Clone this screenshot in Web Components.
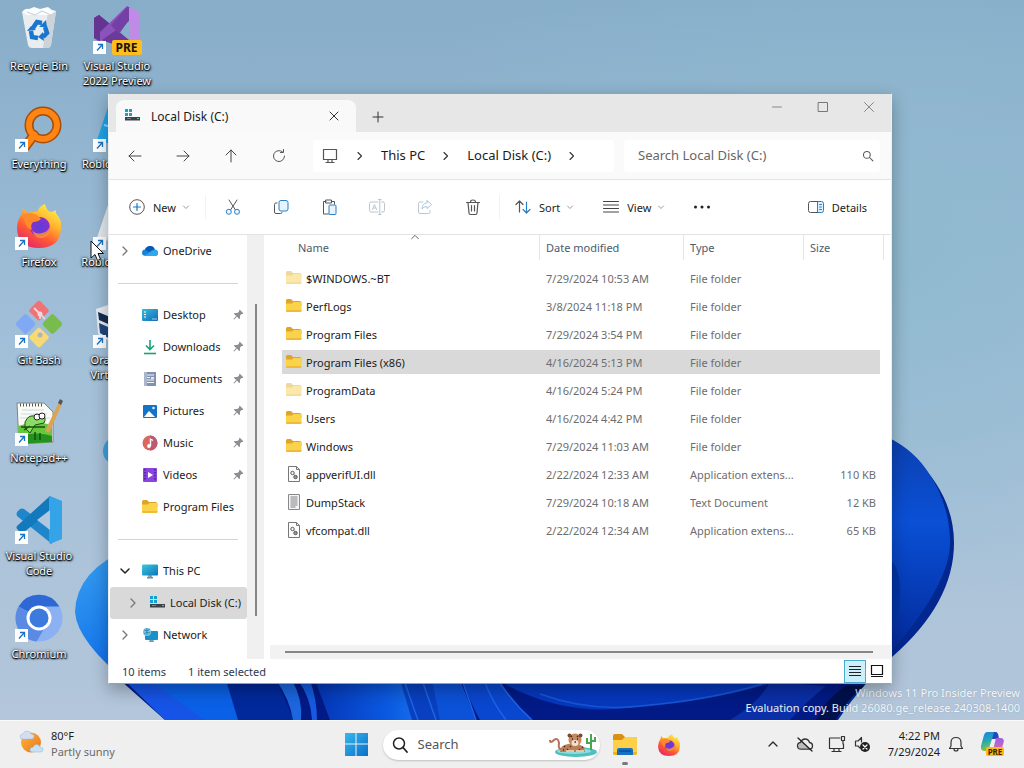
<!DOCTYPE html>
<html lang="en">
<head>
<meta charset="utf-8">
<title>Desktop</title>
<style>
html,body{height:100%;margin:0}
body{font:11px/15px "Noto Sans","Open Sans",sans-serif;color:#1b1b1b;overflow:hidden}
</style>
</head>
<body>
<desk-top></desk-top>
<script>
const folder = (a, b, c) => `<path d="M0 2.500Q0 1 1.500 1H5l2 2h6.500Q15.500 3 15.500 5V8H0z" fill="${c}"/><path d="M0 5.500h6l1.500-1.500H15.500v8.500Q15.500 14 14 14H1.500Q0 14 0 12.500z" fill="${a}"/><path d="M0 12h15.500v.5q0 1.500-1.500 1.500H1.500Q0 14 0 12.500z" fill="${b}"/>`;
const line = (d, c = '#444', w = 1) => `<path d="${d}" fill="none" stroke="${c}" stroke-width="${w}" stroke-linecap="round" stroke-linejoin="round"/>`;
const fox = `<defs><linearGradient id="a" x1=".8" y1="0" x2=".2" y2="1"><stop offset="0" stop-color="#fff44f"/><stop offset=".35" stop-color="#ffb52e"/><stop offset=".65" stop-color="#ff5a36"/><stop offset="1" stop-color="#e3206f"/></linearGradient><radialGradient id="b"><stop offset="0" stop-color="#5b3fd6"/><stop offset="1" stop-color="#8a2fd0"/></radialGradient></defs><path d="M30 2q1 5 5 8 3 0 6-2-1 3 2 6 4 5 3 13-1 19-22 19Q3 46 2 27q0-9 5-15l1-6 5 5q5-2 9-1 2-6 8-8z" fill="url(#a)"/><circle cx="25" cy="25" r="10" fill="url(#b)"/><path d="M7 13l6-2q8-1 13 6-3 3-8 3-3 3-1 8-6-2-7-8z" fill="#ff8a2a"/><path d="M17 28q4 5 10 3 6-1 8-7 1 10-8 12-7 1-10-8z" fill="#ff9b28" opacity=".8"/>`;
const disk = `<g fill="#17a0cf"><path d="M1 1h3v3H1zM5 1h3v3H5zM1 5h3v3H1zM5 5h3v3H5z"/></g><path d="M1 9h15v3.500H1z" fill="#3d4148"/><path d="M3 10h4v1H3z" fill="#7b8088"/><path d="M13 10h2v1h-2z" fill="#4fd0a0"/>`;
const monitor = `<defs><linearGradient id="m" x2="1" y2="1"><stop offset="0" stop-color="#3ec7d8"/><stop offset="1" stop-color="#0a75bd"/></linearGradient></defs><path d="M6.500 12h3l1 3h-5z" fill="#8ca3b3"/><path d="M5 14h6v1.500H5z" fill="#5b93ad"/><rect x="0" y="1.500" width="16" height="11" rx="1" fill="url(#m)"/>`;
const dll = `<path d="M2.500.5h8l3 3v12h-11z" fill="#fdfdfd" stroke="#777"/><path d="M10.500.5v3h3" fill="none" stroke="#777"/><circle cx="6.500" cy="7" r="1.700" fill="none" stroke="#555"/><circle cx="9.500" cy="11" r="1.700" fill="#99a" stroke="#555"/><path d="M7.500 8l1.500 2" stroke="#777"/>`;
const ICONS = {
  folder: [16, folder('#fbd34b', '#eebb36', '#dea52a')],
  folderDim: [16, folder('#fae9a9', '#f5dda0', '#eed7a0')],
  dll: [16, dll], disk: [16, disk], monitor: [16, monitor],
  text: [16, `<path d="M2.500.5h11v15h-11z" fill="#f4f4f4" stroke="#888"/><path d="M4.500 3h7M4.500 5h7M4.500 7h7M4.500 9h7M4.500 11h7M4.500 13h5" stroke="#7d8187"/>`],
  onedrive: [16, `<path d="M4 13Q0 13 0 9.700 0 6.800 3 6.500 4.500 3 8.200 3q3.600 0 4.500 3.500Q16 6.800 16 9.900 16 13 13 13z" fill="#1583dc"/><path d="M3 6.500Q4.500 3 8.200 3q3.600 0 4.500 3.500Q10 6 7 9z" fill="#0a57b5"/><path d="M2.500 12.700L10 8q4-2 5.700.5.300.6.300 1.500Q16 13 13 13H4z" fill="#31a8ee"/>`],
  desktop: [16, `<defs><linearGradient id="m" x2="1" y2="1"><stop offset="0" stop-color="#35bcd8"/><stop offset="1" stop-color="#1668bb"/></linearGradient></defs><rect y="2" width="16" height="12" rx="1" fill="url(#m)"/><path d="M2 5h2M2 7.500h2M2 10h2" stroke="#fff"/><path d="M10 12h5" stroke="#8fd5ee"/>`],
  download: [16, `<path d="M8 1v9M4 6.500L8 10.500l4-4" fill="none" stroke="#18a27c" stroke-width="1.600"/><path d="M2 14.500h12" stroke="#18a27c" stroke-width="1.600"/>`],
  document: [16, `<path d="M2 1h12v14H2z" fill="#8192b1"/><path d="M2 1h3v14H2z" fill="#a9b6cc"/><path d="M5 4h7M5 6.500h3M5 9h7M5 11.500h7" stroke="#f4f7fb" stroke-width="1.200"/><path d="M9 6h3v2H9z" fill="#dfe8f5"/>`],
  picture: [16, `<rect x="1" y="2" width="14" height="13" rx="1" fill="#1373c6"/><path d="M2 14l5-6 6 6z" fill="#fff"/><circle cx="11.500" cy="5" r="1.300" fill="#d5efff"/>`],
  music: [16, `<circle cx="8" cy="8" r="7.500" fill="#d9685f"/><path d="M8 .5a7.500 7.500 0 0 1 0 15z" fill="#bd5a70"/><path d="M8.500 3.500v7.500M8.500 4l2.500 1.500" stroke="#fff" stroke-width="1.400"/><circle cx="7" cy="11" r="1.900" fill="#fff"/>`],
  video: [16, `<rect x="1" y="1" width="14" height="14" rx="1" fill="#8a45e0"/><path d="M3 2v12M13 2v12" stroke="#4b218f" stroke-width="1.500" stroke-dasharray="1.500 1.500"/><path d="M6 5l5 3-5 3z" fill="#fff"/>`],
  network: [16, `<path d="M8 12h3l1 3H7z" fill="#6aa0b8"/><rect x="3" y="4" width="13" height="9" rx="1" fill="#1b8fc9"/><circle cx="5" cy="5" r="4" fill="#7cc4e4"/><path d="M2 3q3 2 6-1M2 7q2-3 6-1M5 1v7" fill="none" stroke="#2a7ea6" stroke-width=".8"/>`],
  pin: [12, `<g transform="rotate(45 6 6)"><path d="M3.500 1h5v1l-.7.7v2.300l2 2v1H2.200V7l2-2V2.700l-.7-.7z" fill="#8a8f94"/><path d="M6 8v4" stroke="#8a8f94"/></g>`],
  right: [12, line('M4 2l4 4-4 4', '#777', 1.3)],
  rightBold: [12, line('M4 2.500L7.500 6 4 9.500', '#333', 1.1)],
  down: [12, line('M2 4l4 4 4-4', '#222', 1.5)],
  downSmall: [8, line('M1.500 3L4 5.500 6.500 3', '#999')],
  up: [12, line('M2 8l4-4 4 4', '#222', 1.2)],
  asc: [12, line('M2 8l4-4 4 4', '#666', 1.2)],
  back: [16, line('M14 8H2M7 3L2 8l5 5')], forward: [16, line('M2 8h12M9 3l5 5-5 5')],
  upArrow: [16, line('M8 14V2M3 7l5-5 5 5')],
  refresh: [16, line('M13.500 8a5.500 5.500 0 1 1-2-4.200M12.500 1.500V4.500H9.500', '#555')],
  pc: [16, line('M1.500 1.500h13v10h-13zM6 11.500v3M10 11.500v3M4 14.500h8', '#555', 1.2)],
  search: [16, `<circle cx="6.500" cy="6.500" r="4.500" fill="none" stroke="#555" stroke-width="1.400"/>` + line('M10 10l4.500 4.500', '#555', 1.4)],
  searchBold: [16, `<circle cx="7" cy="6.500" r="5.500" fill="none" stroke="#222" stroke-width="1.500"/>` + line('M11 10.500l4 4.500', '#222', 1.8)],
  plus: [12, line('M6 1v10M1 6h10', '#333')], close: [12, line('M2 2l8 8M10 2l-8 8', '#333')],
  min: [12, line('M1.500 6h9', '#888')], max: [12, line('M1.500 1.500h9v9h-9z', '#777')], closeDim: [12, line('M1.500 1.500l9 9M10.500 1.500l-9 9', '#888')],
  new: [16, `<circle cx="8" cy="8" r="7.300" fill="none" stroke="#555"/>` + line('M8 4.500v7M4.500 8h7', '#1679c6', 1.2)],
  cut: [16, line('M4 1l6.500 10M12 1L5.500 11', '#555') + `<g fill="#eaf5ff" stroke="#2b7fc4"><circle cx="3.800" cy="12.800" r="2.500"/><circle cx="12" cy="12.800" r="2.500"/></g>`],
  copy: [16, line('M4 4H3Q1.500 4 1.500 5.500V13q0 1.500 1.500 1.500h4.500q1.500 0 1.500-1', '#555') + `<rect x="6" y="1.500" width="9" height="10.500" rx="2" fill="#e6f4ff" stroke="#2b7fc4"/>`],
  paste: [16, line('M5 2.500H2.500v12.500h5M10.500 2.500H13.500V5M5 1h5.500v3H5z', '#555') + `<rect x="8" y="6" width="7" height="9.500" rx="1" fill="#e6f4ff" stroke="#2b7fc4"/>`],
  rename: [16, `<g opacity=".55">` + line('M9 3H2Q.5 3 .5 4.500v7Q.5 13 2 13h7M12.500 3h1.500q1.500 0 1.500 1.500v7q0 1.500-1.500 1.500h-1.500M3.500 10.500l2-5 2 5M4.200 9h2.600', '#8a97a5') + line('M10.800 1v14M9.500.5h2.600M9.500 15.500h2.600', '#6b9cc4') + '</g>'],
  share: [16, `<g opacity=".55">` + line('M6 3H3Q1.500 3 1.500 4.500V13q0 1.500 1.500 1.500h8.500q1.500 0 1.500-1.500v-1.500', '#8a97a5') + line('M10 1.500l4.500 4-4.500 4V7.500Q6.500 7.500 5 10 5 4.500 10 3.700z', '#6b9cc4') + '</g>'],
  trash: [16, line('M1.500 3.500h13M5.500 3Q5.500 1 8 1t2.500 2M3 3.500l1 10.500q0 1.500 1.500 1.500h5q1.500 0 1.500-1.500l1-10.500M6.500 6.500v5.500M9.500 6.500v5.500', '#555', 1.2)],
  sort: [16, line('M4.500 13V2M1 5.500L4.500 2 8 5.500', '#555', 1.2) + line('M11.500 3v11M8 10.500l3.500 3.500 3.500-3.500', '#2b7fc4', 1.2)],
  view: [16, line('M.5 2.500h15M.5 6h15M.5 9.500h15M.5 13h15')],
  more: [18, `<g fill="#222"><circle cx="2.500" cy="9" r="1.500"/><circle cx="9" cy="9" r="1.500"/><circle cx="15.500" cy="9" r="1.500"/></g>`],
  details: [16, `<path d="M9.500 2.500H13.500q2 0 2 2v7q0 2-2 2h-4z" fill="#e0f2ff" stroke="#2b7fc4"/>` + line('M9.500 2.500H2.500q-2 0-2 2v7q0 2 2 2h7', '#555') + line('M11.500 5.500h2M11.500 8h2M11.500 10.500h2', '#2b7fc4')],
  list: [14, `<path d="M1 2.500h12M1 5.500h12M1 8.500h12M1 11.500h12" stroke="#222"/>`],
  tiles: [14, `<path d="M1.500 1.500h11v9h-11z" fill="#fff" stroke="#111" stroke-width="1.200"/><path d="M1 12.500h12" stroke="#111"/>`],
  start: [24, `<defs><linearGradient id="s" x2="1" y2="1"><stop offset="0" stop-color="#35b8ee"/><stop offset="1" stop-color="#0a6fca"/></linearGradient></defs><path d="M1 0h10.500v10.500H1zM12.500 0H24v10.500H12.500zM1 11.500h10.500V23H1zM12.500 11.500H24V23H12.500z" fill="url(#s)"/>`],
  explorer: [24, `<path d="M0 3q0-2 2-2h7l3 3h10q2 0 2 2v6H0z" fill="#d99016"/><path d="M0 7h9l3-3h10q2 0 2 2v14q0 2-2 2H0z" fill="#fdd047"/><path d="M0 19h24v1q0 2-2 2H2q-2 0-2-2z" fill="#efb424"/><path d="M4 22v-5q0-2 2-2h12q2 0 2 2v5z" fill="#1671c4"/><path d="M6 18h12" stroke="#0a4f99" stroke-width="1.500"/>`],
  firefox: [48, fox],
  weather: [26, `<defs><linearGradient id="w" x2="1" y2="1"><stop offset="0" stop-color="#ffb73a"/><stop offset="1" stop-color="#e8731c"/></linearGradient></defs><circle cx="13" cy="11.500" r="10" fill="url(#w)"/><path d="M5 8q-3 0-3-2.500T5 3q1-3 4-3t4 3q3 0 3 2.500T13 8z" fill="#d3def2" stroke="#a9b9dc" stroke-width=".6"/><path d="M15 21q-3 0-3-2.300t3-2.400q1-2.800 3.700-2.800t3.300 2.800q3 0 3 2.400T22 21z" fill="#c7e2f6" stroke="#93bddd" stroke-width=".6"/>`],
  leopard: [48, `<ellipse cx="27" cy="20" rx="21" ry="5" fill="#4fbfc2"/><ellipse cx="25" cy="19" rx="17" ry="3" fill="#8edcda"/><path d="M12 17Q9 17 10 11 9 5 5 8q-4 4-4 0" fill="none" stroke="#b86f5e" stroke-width="2"/><path d="M11 20q0-7 8-8 9-2 16 3l1 5z" fill="#b98058"/><circle cx="26" cy="8" r="6.500" fill="#c48a60"/><circle cx="20.500" cy="3.500" r="2" fill="#7a4b34"/><circle cx="31.500" cy="3.500" r="2" fill="#7a4b34"/><ellipse cx="26" cy="11" rx="3.500" ry="3" fill="#f3dfcf"/><path d="M23 7h1M28 7h1M25.500 10h1.500M22 4l1 1M28 4l1 1M15 14l1 1M18 17l1 1M21 14l1 1M33 15l1 1M30 17l1 1M14 18h1" stroke="#4a2c22" stroke-width="1.400"/><path d="M17 19h8M27 19h8" stroke="#e7c7a8" stroke-width="2"/><path d="M42 18V2M42 11h-4V6M42 9h4V5" fill="none" stroke="#4ba653" stroke-width="2"/>`, 26],
  cloudOff: [18, line('M5 14Q1.500 14 1.500 10.800 1.500 8 4.500 7.500 6 4 9 4q3.500 0 4.500 3.500 3 .3 3 3.200Q16.500 14 13.500 14z', '#333', 1.3) + `<path d="M5 14q-3 0-3-3t3-3l1-2 8 8z" fill="#999" opacity=".6"/>` + line('M2 3l14 13', '#222', 1.3)],
  netPc: [18, line('M12 3H1.500v10.500h14V9M6 13.500V16M11 13.500V16M4 16.500h9M13.500 1.500h3v4h-3zM15 5.500V9', '#333', 1.2)],
  mute: [18, line('M8.500 2.500L5 6H2.500v5H5l2 2M8.500 2.500V7', '#333', 1.2) + `<circle cx="12" cy="12" r="5" fill="#222"/>` + line('M10 10l4 4M14 10l-4 4', '#fff', 1.2)],
  bell: [16, line('M1.500 12.500L3 10V6.500Q3 1.500 8 1.500t5 5V10l1.500 2.500zM6 13q0 2 2 2t2-2', '#333', 1.2)],
  copilot: [24, `<defs><linearGradient id="c" x2=".3" y2="1"><stop offset="0" stop-color="#1e7fe0"/><stop offset=".5" stop-color="#22a7b8"/><stop offset="1" stop-color="#8cc63f"/></linearGradient><linearGradient id="d" x2="0" y2="1"><stop offset="0" stop-color="#9a5fe6"/><stop offset="1" stop-color="#f0709a"/></linearGradient></defs><path d="M7 0h8q3 0 3 4l-2 3h-4L8 19H5Q0 19 1 14L4 3Q5 0 7 0z" fill="url(#c)"/><path d="M14 0h1q3 0 3.500 4L19 7h-7z" fill="#2747c0"/><path d="M16 6h4q5 0 3.500 5L21 19q-1 3-4 3H9q3 0 4-4z" fill="url(#d)"/><rect x="6" y="15" width="18" height="9" rx="2" fill="#fbbb16"/><text x="15" y="22.500" text-anchor="middle" font-family="Noto Sans" font-weight="700" font-size="8" fill="#3a2100">PRE</text>`],
  recycle: [48, `<path d="M7 6l34-1-5 34q-1 3-4 3H17q-3 0-4-3z" fill="#e9edf0"/><path d="M33 5h8l-5 34q-1 3-4 3h-4z" fill="#ccd3d9"/><path d="M7 6q3-4 7-3l5-2 6 2 8-2 4 3 4 1-6 4H12z" fill="#fafcfd"/><path d="M12 6l8 3 7-4 9 4" fill="none" stroke="#c5ced6"/><g fill="none" stroke="#1976cf" stroke-width="4.500"><path d="M18 22l4-6 5 1"/><path d="M30 21l2 6-4 4"/><path d="M23 32l-6-1-1-6"/></g><path d="M24 21h8l-1-7zM28 26l-5 5 6 4zM12 25l4-5 5 4z" fill="#1976cf"/>`],
  vs: [48, `<path d="M1 12l5-3 30 25-6 7L1 32z" fill="#6b3a9c"/><path d="M1 32L34 0l4 2v12L6 36z" fill="#8c52bb"/><path d="M1 12l5-3 10 8-9 8v10l-6-3z" fill="#653493"/><path d="M36 1l11 5v33l-11 5z" fill="#c08be6"/><path d="M36 1l-2 0-16 18 8 9L36 14z" fill="#7440a5"/><rect x="19" y="34" width="30" height="15" rx="2" fill="#ffbd1e"/><text x="33.500" y="46" text-anchor="middle" font-family="Noto Sans" font-weight="700" font-size="12" fill="#1b1200">PRE</text>`],
  everything: [48, `<g fill="none" stroke-linecap="round"><path d="M19 31L10 43" stroke="#a64d0c" stroke-width="10"/><circle cx="28" cy="21" r="14" stroke="#a64d0c" stroke-width="9"/><path d="M19 31L10 43" stroke="#ff8411" stroke-width="7"/><circle cx="28" cy="21" r="14" stroke="#ff8411" stroke-width="6"/></g>`],
  git: [48, `<g transform="rotate(45 24 24)"><rect x="7" y="7" width="15" height="15" rx="2" fill="#ee7377"/><rect x="26" y="7" width="15" height="15" rx="2" fill="#78bd4c"/><rect x="7" y="26" width="15" height="15" rx="2" fill="#80a9f5"/><rect x="26" y="26" width="15" height="15" rx="2" fill="#f7da71"/></g><path d="M19 8l6 6v5M25 14l5 5M25 29v7" fill="none" stroke="#e9d0d4" stroke-width="2"/><circle cx="25" cy="14" r="2.500" fill="#f0d7da"/><circle cx="25" cy="35" r="2.500" fill="#aeb4ba"/>`],
  npp: [48, `<path d="M2 5h27l9 9v30l-34 2z" fill="#fbfbf6" stroke="#7f8480"/><path d="M3 28q16-6 34-1v17l-33 2z" fill="#64c83a"/><path d="M3 38q20-5 34 0v6l-33 2z" fill="#23921f"/><path d="M5 7h24" stroke="#555" stroke-width="3" stroke-dasharray="1 2"/><path d="M7 12h22M6 16h26M5 20h30" stroke="#ccd6dd"/><path d="M10 24q4-9 12-5l5-3q5 4 2 9l-9 2-5 8-5-5z" fill="#8add63" stroke="#2b4b20"/><circle cx="22" cy="19" r="3" fill="#fff" stroke="#222"/><circle cx="27" cy="18" r="3" fill="#fff" stroke="#222"/><path d="M6 29h24M9 32l6-4M20 42v-8M25 42v-7" stroke="#174f14" stroke-width="1.500"/><path d="M30 33l14-29 3 2-13 29z" fill="#dca354"/><path d="M43 5l2-4 3 2-2 4z" fill="#4d5560"/>`],
  vscode: [48, `<path d="M2 16l3-3q2-1 4 0l28 21v14L2 20q-1-2 0-4z" fill="#1f86cc"/><path d="M35 0l2 14L9 36q-2 1-4 0l-3-3q-1-2 0-3z" fill="#1279bd"/><path d="M35 0l12 5v38l-12 5-1-2V2z" fill="#35a3e8"/><path d="M35 14v20L22 24z" fill="#b0c7de"/>`],
  chromium: [48, `<circle cx="24" cy="24" r="23.500" fill="#8bb1f3"/><path d="M24 24L3.600 12.500a23.500 23.500 0 0 1 40.800 0H24z" fill="#2d68d4"/><path d="M3.600 12.500a23.500 23.500 0 0 0 18 35L32 30z" fill="#5a8ae2"/><circle cx="24" cy="24" r="12.500" fill="#fff"/><circle cx="24" cy="24" r="9.500" fill="#3c7ade"/>`],
  player: [48, `<path d="M16 0L46 8 38 46 4 36z" fill="#1fa4ea"/><path d="M11 21l32 8" stroke="#8fd3f5" stroke-width="2"/>`],
  studio: [48, `<path d="M16 0L46 8 38 46 4 36z" fill="#c3cad0"/><path d="M16 0l8 2-10 36-10-2z" fill="#e6eaed"/>`],
  vbox: [48, `<path d="M3 9L24 2l22 8-2 26-20 10L5 34z" fill="#e6ebf2"/><path d="M5 12l17 7v8L6 20z" fill="#172c50"/><path d="M6 23l16 7v12L7 33z" fill="#20457d"/><path d="M26 20l18-8-2 23-16 8z" fill="#20457d"/>`],
  cursor: [24, `<path d="M3 1v17l4-3.500 2.500 6 3-1.300L10 13.500h5.500z" fill="#fff" stroke="#111"/>`],
  shortcut: [13, `<path d="M0 0h13v13H0z" fill="#fff"/><path d="M4 9.500l5-5.500M5 3.500h4.500V8" fill="none" stroke="#1a72c4" stroke-width="1.300"/>`]
};
function define(tag, css, html, setup) {
  const t = document.createElement('template');
  t.innerHTML = `<style>*{box-sizing:border-box}button{font:inherit;color:inherit;background:none;border:0;padding:0;margin:0}input{font:inherit;border:0;background:none;outline:0;padding:0;min-width:0}${css}</style>${html}`;
  customElements.define(tag, class extends HTMLElement {
    constructor() {
      super();
      this.attachShadow({ mode: 'open' }).append(t.content.cloneNode(true));
    }
    connectedCallback() { if (setup) setup(this, this.shadowRoot); }
  });
}
define('ui-icon', ':host{display:inline-flex;flex:none;width:var(--w,16px);height:var(--h,16px)}svg{display:block;width:100%;height:100%;overflow:visible}', '<svg aria-hidden="true"></svg>', (h, r) => {
  const [w, body, tall = w] = ICONS[h.getAttribute('name')];
  const s = r.querySelector('svg');
  s.setAttribute('viewBox', `0 0 ${w} ${tall}`);
  s.innerHTML = body;
  h.style.setProperty('--w', (h.getAttribute('size') || w) + 'px');
  h.style.setProperty('--h', (h.getAttribute('size') || tall) + 'px');
});
define('desk-icon', `:host{display:block;width:78px;height:98px}
button{display:flex;flex-direction:column;align-items:center;width:100%;padding-top:6px;gap:4px}
.pic{position:relative;display:flex}.arrow{position:absolute;left:0;bottom:0}
span.t{color:#fff;line-height:15px;white-space:pre-line;text-shadow:1px 1px 2px #000,0 1px 1px #000,0 0 3px #000}`,
`<button><span class="pic"></span><span class="t"><slot></slot></span></button>`, (h, r) => {
  r.querySelector('.pic').innerHTML = `<ui-icon name="${h.getAttribute('icon')}" size="48"></ui-icon>` + (h.hasAttribute('link') ? '<ui-icon class="arrow" name="shortcut"></ui-icon>' : '');
});
define('wall-paper', ':host{display:block}svg{display:block;width:100%;height:100%}', `<svg viewBox="0 0 1024 720" preserveAspectRatio="xMidYMax slice" aria-hidden="true">
<defs><linearGradient id="bg" x2="0" y2="1"><stop offset="0" stop-color="#87adc9"/><stop offset=".5" stop-color="#a3c0d9"/><stop offset="1" stop-color="#b3c6da"/></linearGradient>
<radialGradient id="gl" cx=".85" cy=".35" r=".5"><stop offset="0" stop-color="#8fb9cf"/><stop offset="1" stop-color="#8fb9cf" stop-opacity="0"/></radialGradient>
<linearGradient id="l" x1="0" y1="0" x2=".6" y2="1"><stop offset="0" stop-color="#3aa2ee"/><stop offset=".5" stop-color="#1779ec"/><stop offset="1" stop-color="#0b4fd8"/></linearGradient>
<linearGradient id="r" y2="1" x2="0"><stop offset="0" stop-color="#0c3fae"/><stop offset=".4" stop-color="#0a50d6"/><stop offset="1" stop-color="#032a9a"/></linearGradient>
<linearGradient id="f" x2="1"><stop offset="0" stop-color="#0535b4"/><stop offset=".6" stop-color="#0a58e0"/><stop offset="1" stop-color="#1b78f0"/></linearGradient></defs>
<rect width="1024" height="720" fill="url(#bg)"/><rect width="1024" height="720" fill="url(#gl)"/>
<path d="M120 434q-17 5-17 17t17 16z" fill="#3f9fdc"/>
<path d="M130 548Q76 570 75 612q2 30 56 73l38 35h60V560z" fill="url(#l)"/>
<path d="M110 600q-6 24 4 60l26 30h80V590z" fill="#0f5be2"/>
<path d="M860 427q34 8 56 32 38 38 38 84 0 60-62 114-34 32-54 63H790V440z" fill="#02288f"/>
<path d="M880 434q30 12 46 35 24 34 24 74 0 40-58 108z" fill="url(#r)"/>
<path d="M892 562q8 8 8 30t-8 40z" fill="#0334a4"/>
<path d="M120 680h750q-26 18-40 40H165z" fill="#021a86"/>
<path d="M124 680l41 40h45l-54-40z" fill="#1554e6"/><path d="M150 680l54 40h36l-14-40z" fill="#0a60e6"/>
<path d="M226 680l12 40h56l-18-40z" fill="#02299c"/>
<path d="M276 680q14 20 17 40h8q2-20-9-40z" fill="#1c66df"/><path d="M298 680q13 18 14 40h5q0-20-7-40z" fill="#155ae0"/>
<path d="M315 680h95l22 40H330z" fill="url(#f)"/>
<path d="M400 680l12 40h32l-12-40z" fill="#0840c0"/><path d="M432 680l8 40h36l-16-40z" fill="#0c52d8"/><path d="M462 680q8 22 18 40h52q-22-20-34-40z" fill="#0a47d0"/>
<path d="M404 680q6 18 14 40M422 680l14 40M462 680l14 40M484 680q8 22 22 40M498 680q14 22 34 40" fill="none" stroke="#1d64e4" stroke-width="1.500"/>
<path d="M498 680q60 36 130 28 80-6 140-24l-2-4z" fill="#0638bd"/>
<path d="M540 694q50 18 100 12 70-6 122-22" fill="none" stroke="#1656d4" stroke-width="1.500"/>
<path d="M770 682q-10 20-40 38h60q16-18 36-34z" fill="#0a2fa8"/><path d="M846 686q-20 12-30 34h20q10-20 28-34z" fill="#01104e"/>
</svg>`);
define('nav-item', `:host{display:block}button{display:flex;align-items:center;width:100%;height:32px;padding:0 3px 0 9px;text-align:left;white-space:nowrap;line-height:16px}
:host([deep]) button{padding-left:17px}:host([on]) button{background:#d9d9d9;border-radius:3px}.c{width:12px;margin-right:11px;display:flex;flex:none}.i{display:flex;margin-right:5px}.p{margin-left:auto;display:flex}:host([deep]) button{padding-right:0}:host([deep]) .c{margin-right:10px}`,
`<button><span class="c"></span><span class="i"></span><slot></slot><span class="p"></span></button>`, (h, r) => {
  const g = n => h.getAttribute(n);
  if (g('chev')) r.querySelector('.c').innerHTML = `<ui-icon name="${g('chev')}"></ui-icon>`;
  r.querySelector('.i').innerHTML = `<ui-icon name="${g('icon')}"></ui-icon>`;
  if (h.hasAttribute('pin')) r.querySelector('.p').innerHTML = '<ui-icon name="pin"></ui-icon>';
});
define('tool-button', `:host{display:block}button{display:flex;align-items:center;justify-content:center;gap:8px;height:40px;min-width:48px;padding:0 12px}:host([menu]) button{padding-right:13px}.d{display:flex;margin-left:-2px}`,
`<button></button>`, (h, r) => {
  const b = r.querySelector('button');
  b.innerHTML = `<ui-icon name="${h.getAttribute('icon')}"></ui-icon><slot></slot>` + (h.hasAttribute('menu') ? '<span class="d"><ui-icon name="downSmall"></ui-icon></span>' : '');
  if (!h.textContent) { b.style.gap = 0; b.setAttribute('aria-label', h.getAttribute('icon')); }
  if (h.hasAttribute('off')) b.disabled = true;
});
const FILES = [
  ['folderDim', '$WINDOWS.~BT', '7/29/2024 10:53 AM', 'File folder', ''],
  ['folder', 'PerfLogs', '3/8/2024 11:18 PM', 'File folder', ''],
  ['folder', 'Program Files', '7/29/2024 3:54 PM', 'File folder', ''],
  ['folder', 'Program Files (x86)', '4/16/2024 5:13 PM', 'File folder', ''],
  ['folderDim', 'ProgramData', '4/16/2024 5:24 PM', 'File folder', ''],
  ['folder', 'Users', '4/16/2024 4:42 PM', 'File folder', ''],
  ['folder', 'Windows', '7/29/2024 11:03 AM', 'File folder', ''],
  ['dll', 'appverifUI.dll', '2/22/2024 12:33 AM', 'Application extens...', '110 KB'],
  ['text', 'DumpStack', '7/29/2024 10:18 AM', 'Text Document', '12 KB'],
  ['dll', 'vfcompat.dll', '2/22/2024 12:34 AM', 'Application extens...', '65 KB']
];
define('file-table', `:host{display:block;position:relative}
table{width:100%;table-layout:fixed;border-collapse:separate;border-spacing:0}
th{height:25px;padding:0 6px;text-align:left;font-weight:400;color:#4c5a6b;border-right:1px solid #e3e6ea}
th:first-child{padding-left:16px}
.date{width:144px}.type{width:120px}.size{width:80px}
tbody::before{content:"";display:block;height:4px}
td{height:28px;padding:0 6px;white-space:nowrap;color:#6d6d6d;border:2px solid transparent;border-width:2px 0;background-clip:padding-box}
td:first-child{padding-left:4px;color:#1b1b1b}
td:last-child{text-align:right;padding-right:4px;border-right-width:4px}
.n{display:flex;align-items:center;gap:4px}
tr.on td{background-color:#d9d9d9}
.asc{position:absolute;left:128px;top:-3px}`,
`<ui-icon class="asc" name="asc" size="10"></ui-icon><table><thead><tr><th>Name</th><th class="date">Date modified</th><th class="type">Type</th><th class="size">Size</th></tr></thead><tbody></tbody></table>`, (h, r) => {
  r.querySelector('tbody').innerHTML = FILES.map((f, i) => `<tr${i === 3 ? ' class="on"' : ''}><td><span class="n"><ui-icon name="${f[0]}"></ui-icon>${f[1]}</span></td><td>${f[2]}</td><td>${f[3]}</td><td>${f[4]}</td></tr>`).join('');
});
define('explorer-window', `:host{box-sizing:border-box;display:flex;flex-direction:column;background:#fff;border:1px solid #93a3ae;border-left-color:#e9eef1;border-right-color:#e9eef1;box-shadow:0 6px 16px rgba(0,0,0,.3);overflow:hidden;--hair:#e3e3e3}
.title{display:flex;height:38px;background:#e7e7e7;flex:none}
.tab{display:flex;align-items:center;width:240px;margin:6px 0 0 7px;padding:0 16px 0 8px;background:#f9f9f9;border-radius:8px 8px 0 0;font-size:12px;gap:11px}
.tab button{margin-left:auto;display:flex}
.plus{display:flex;align-items:center;padding:8px 16px 0 16px}
.caps{margin-left:auto;display:flex}.caps button{width:46px;height:26px;padding-left:2px;display:flex;align-items:center;justify-content:center}
.nav{display:flex;align-items:center;height:48px;background:#fafafa;border-bottom:1px solid var(--hair);padding:0 11px 0 2px;flex:none;font-size:13px}
.nav>button{width:48px;height:32px;display:flex;align-items:center;justify-content:center}
.addr{display:flex;align-items:center;flex:1;height:32px;margin-left:10px;background:#fff;border-radius:4px;padding-left:9px;gap:15px;white-space:nowrap}
.addr ui-icon:first-child{margin-right:1px}
.addr a{color:inherit;text-decoration:none}
.find{display:flex;align-items:center;flex:0 1 256px;height:32px;margin-left:10px;background:#fff;border-radius:4px;padding:0 6px 0 14px}
.find input{flex:1;color:#5d5d5d}.find input::placeholder{color:#666;opacity:1}
.tools{display:flex;align-items:center;height:55px;border-bottom:1px solid var(--hair);padding:0 12px 0 8px;flex:none}
.sep{width:1px;height:24px;background:#f2f2f2;margin:0 3px 0 2px}
tool-button[menu]+tool-button[menu]{margin-left:4px}
.end{margin-left:auto}
.body{flex:1;display:flex;min-height:0}
.side{width:138px;padding:0 0 0 1px;overflow:hidden;flex:none}
hr{border:0;height:1px;background:#d4d4d4;margin:16px 9px 15px 8px}
.vs{width:17px;background:#f0f0f0;padding:69px 7px 43px 8px;flex:none}
.vs div{width:2px;height:100%;background:#868686}
.main{flex:1;display:flex;flex-direction:column;min-width:0}
file-table{margin:0 7px 0 18px;flex:1}
.hs{height:14px;background:#f2f2f2;margin-left:6px;padding:6px 18px 0 15px}
.hs div{height:2px;background:#868686}
.status{display:flex;align-items:center;height:24px;padding:0 3px 0 13px;gap:22px;color:#2c3a52;flex:none}
.views{margin-left:auto;display:flex}.views button{display:flex;align-items:center;justify-content:center;width:22px;height:23px}
.views button.on{background:#cdeefb;border:1px solid #4aa9cf}`,
`<div class="title"><div class="tab"><ui-icon name="disk"></ui-icon><span>Local Disk (C:)</span><button aria-label="Close tab"><ui-icon name="close"></ui-icon></button></div>
<button class="plus" aria-label="New tab"><ui-icon name="plus"></ui-icon></button>
<div class="caps"><button aria-label="Minimize"><ui-icon name="min"></ui-icon></button><button aria-label="Maximize"><ui-icon name="max"></ui-icon></button><button aria-label="Close"><ui-icon name="closeDim"></ui-icon></button></div></div>
<div class="nav"><button aria-label="Back"><ui-icon name="back"></ui-icon></button><button aria-label="Forward"><ui-icon name="forward"></ui-icon></button><button aria-label="Up"><ui-icon name="upArrow"></ui-icon></button><button aria-label="Refresh"><ui-icon name="refresh"></ui-icon></button>
<div class="addr"><ui-icon name="pc"></ui-icon><ui-icon name="rightBold"></ui-icon><a href="#pc">This PC</a><ui-icon name="rightBold"></ui-icon><a href="#c">Local Disk (C:)</a><ui-icon name="rightBold"></ui-icon></div>
<label class="find"><input type="text" placeholder="Search Local Disk (C:)" aria-label="Search Local Disk (C:)"><ui-icon name="search" size="12"></ui-icon></label></div>
<div class="tools"><tool-button icon="new" menu>New</tool-button><span class="sep"></span><tool-button icon="cut"></tool-button><tool-button icon="copy"></tool-button><tool-button icon="paste"></tool-button><tool-button icon="rename" off></tool-button><tool-button icon="share" off></tool-button><tool-button icon="trash"></tool-button><span class="sep"></span><tool-button icon="sort" menu>Sort</tool-button><tool-button icon="view" menu>View</tool-button><tool-button icon="more"></tool-button><tool-button class="end" icon="details">Details</tool-button></div>
<div class="body"><nav class="side"><nav-item chev="right" icon="onedrive">OneDrive</nav-item><hr>
<nav-item icon="desktop" pin>Desktop</nav-item><nav-item icon="download" pin>Downloads</nav-item><nav-item icon="document" pin>Documents</nav-item><nav-item icon="picture" pin>Pictures</nav-item><nav-item icon="music" pin>Music</nav-item><nav-item icon="video" pin>Videos</nav-item><nav-item icon="folder">Program Files</nav-item><hr>
<nav-item chev="down" icon="monitor">This PC</nav-item><nav-item deep on chev="right" icon="disk">Local Disk (C:)</nav-item><nav-item chev="right" icon="network">Network</nav-item></nav>
<div class="vs"><div></div></div><div class="main"><file-table></file-table><div class="hs"><div></div></div></div></div>
<div class="status"><span>10 items</span><span>1 item selected</span><div class="views"><button class="on" aria-label="Details view"><ui-icon name="list"></ui-icon></button><button aria-label="Large icons"><ui-icon name="tiles"></ui-icon></button></div></div>`);
define('task-bar', `:host{box-sizing:border-box;display:grid;grid-template-columns:1fr auto 1fr;align-items:center;height:48px;background:#efefef;border-top:1px solid #fafafa}
.w{display:flex;align-items:center;gap:7px;padding:0 0 1px 18px;text-align:left;line-height:16px}.w small{display:block;font-size:11px;color:#6a6a6a}
.mid{display:flex;align-items:center}.app{position:relative;width:44px;height:44px;display:flex;align-items:center;justify-content:center}
.app.run::after{content:"";position:absolute;bottom:2px;width:6px;height:3px;border-radius:2px;background:#7a7a7a}
.s{display:flex;align-items:center;width:217px;height:30px;margin:0 3px 0 5px;background:#fff;border-radius:15px;box-shadow:0 1px 2px rgba(0,0,0,.2);padding:0 3px 0 9px;gap:10px;font-size:13px}
.s input{flex:1;color:#555}.s input::placeholder{color:#555;opacity:1}
.tray{display:flex;align-items:center;justify-content:flex-end;padding:0 20px 1px 0}
.tray button{display:flex;justify-content:center}.tray .t{width:32px}.tray .clock{display:block;text-align:right;line-height:16px;margin:0 8px 0 17px}.tray .co{margin-left:16px}`,
`<button class="w"><ui-icon name="weather"></ui-icon><span>80°F<small>Partly sunny</small></span></button>
<div class="mid"><button class="app" aria-label="Start"><ui-icon name="start"></ui-icon></button><label class="s"><ui-icon name="searchBold"></ui-icon><input type="text" placeholder="Search" aria-label="Search"><ui-icon name="leopard"></ui-icon></label><button class="app run" aria-label="File Explorer"><ui-icon name="explorer"></ui-icon></button><button class="app" aria-label="Firefox"><ui-icon name="firefox" size="24"></ui-icon></button></div>
<div class="tray"><button class="t" aria-label="Hidden icons"><ui-icon name="up"></ui-icon></button><button class="t" aria-label="OneDrive"><ui-icon name="cloudOff"></ui-icon></button><button class="t" aria-label="Network"><ui-icon name="netPc"></ui-icon></button><button aria-label="Volume"><ui-icon name="mute"></ui-icon></button><button class="clock">4:22 PM<br>7/29/2024</button><button aria-label="Notifications"><ui-icon name="bell"></ui-icon></button><button class="co" aria-label="Copilot"><ui-icon name="copilot"></ui-icon></button></div>`);
define('desk-top', `:host{display:grid;grid-template-rows:1fr auto;height:100vh}
.area{position:relative;overflow:hidden}
wall-paper{position:absolute;inset:0}
.icons{position:relative;display:flex}
.mark{position:absolute;right:4px;bottom:5px;text-align:right;color:#fff;opacity:.9;line-height:15px;text-shadow:0 0 1px rgba(90,110,130,.6)}
explorer-window{position:absolute;left:108px;top:93px;right:132px;bottom:36px}
.cur{position:absolute;left:88px;top:240px}`,
`<div class="area"><wall-paper></wall-paper>
<div class="icons"><div><desk-icon icon="recycle">Recycle Bin</desk-icon><desk-icon icon="everything" link>Everything</desk-icon><desk-icon icon="firefox" link>Firefox</desk-icon><desk-icon icon="git" link>Git Bash</desk-icon><desk-icon icon="npp" link>Notepad++</desk-icon><desk-icon icon="vscode" link>Visual Studio
Code</desk-icon><desk-icon icon="chromium" link>Chromium</desk-icon></div>
<div><desk-icon icon="vs" link>Visual Studio
2022 Preview</desk-icon><desk-icon icon="player" link>Roblox Player</desk-icon><desk-icon icon="studio" link>Roblox Studio</desk-icon><desk-icon icon="vbox" link>Oracle VM
VirtualBox</desk-icon></div></div>
<div class="mark">Windows 11 Pro Insider Preview<br>Evaluation copy. Build 26080.ge_release.240308-1400</div>
<explorer-window></explorer-window><ui-icon class="cur" name="cursor"></ui-icon></div><task-bar></task-bar>`);
</script>
</body>
</html>
